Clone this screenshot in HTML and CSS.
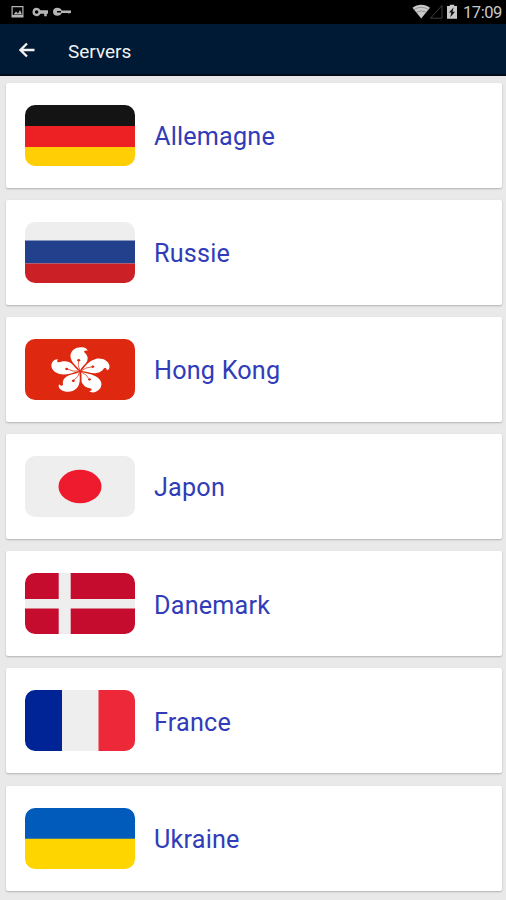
FILE: index.html
```html
<!DOCTYPE html>
<html lang="fr">
<head>
<meta charset="utf-8">
<title>Servers</title>
<link rel="stylesheet" href="styles.css">
</head>
<body>
<header>
  <div class="status">
    <svg class="notifications" viewBox="0 0 64 14" width="64" height="14">
      <path fill-rule="evenodd" d="M.5 1h12v11.500H.5zM1.700 2.200V10h9.600V2.200zM2.500 9.500l2.500-3 2 2 2-3.500 2 4.500z"/>
      <path fill-rule="evenodd" d="M25.500 2.500a4.200 4.200 0 0 1 4 2.500H37v3.500h-1.200V11h-2.600V8.500h-3.700a4.200 4.200 0 1 1-4-6zm.1 2.500a1.800 1.800 0 1 0 0 3.600 1.800 1.800 0 0 0 0-3.600z" transform="translate(0 .2)"/>
      <path fill-rule="evenodd" d="M46.500 2.800c2 0 3.500.9 4.200 2.700H60V8h-1.500v.6h-1.300V8h-6.500c-.7 1.700-2.200 2.700-4.200 2.700-2.800 0-4.500-1.600-4.500-4s1.700-3.900 4.500-3.900zM46 6v1.400h4V6z"/>
    </svg>
    <svg class="signals" viewBox="0 0 48 18" width="48" height="18">
      <path d="M.5 4.800C5.500.8 13 .8 18 4.800L9.200 15.500z" fill="#c9c9c9"/>
      <path d="M1.500 7c4.500-3.500 11-3.500 15.500 0M4 9.800c3-2.300 7.500-2.300 10.500 0" fill="none" stroke="#6d6d6d" stroke-width=".6"/>
      <path d="M18.500 15.200 30 2.500v12.700z" fill="none" stroke="#3e3e3e"/>
      <path d="M35 3h2.800V1.700h4.400V3H45v12.700H35z" fill="#c9c9c9"/>
      <path d="M41.700 4.200 37 9.500h2.300l-1 4.800L43 8.700h-2.500z" fill="#111"/>
    </svg>
    <span class="clock">17:09</span>
  </div>
  <div class="toolbar">
    <svg class="back" viewBox="0 0 16 16" width="16" height="16"><path d="M15.500 8H2M8 1.500 1.500 8 8 14.500"/></svg>
    <h1>Servers</h1>
  </div>
</header>
<main>
  <div class="card">
    <svg class="flag" viewBox="0 0 110 61"><path fill="#141414" d="M0 0h110v21H0z"/><path fill="#ed2024" d="M0 21h110v21H0z"/><path fill="#ffce05" d="M0 42h110v19H0z"/></svg>
    <span>Allemagne</span>
  </div>
  <div class="card">
    <svg class="flag" viewBox="0 0 110 61"><path fill="#eee" d="M0 0h110v19H0z"/><path fill="#22408c" d="M0 18.500h110v23H0z"/><path fill="#cc2027" d="M0 41.500h110V61H0z"/></svg>
    <span>Russie</span>
  </div>
  <div class="card">
    <svg class="flag" viewBox="0 0 110 61">
      <defs>
        <g id="petal">
          <path fill="#fff" d="M0-1C-3-5-7.800-9.500-7.800-15.500-7.600-21-3-24.500 1.500-24 4-23.800 5.500-22.500 6-20.500 4-21.300 2.800-20.500 3.200-19 4.500-17.500 6.600-15.500 5.800-11 5-7.500 1.500-5 0-1z"/>
          <path fill="none" stroke="#de2910" stroke-width=".6" d="M0-1Q-2.500-5-1.200-10"/>
          <circle cx="-1.200" cy="-11" r="1.200" fill="#de2910"/>
        </g>
      </defs>
      <path fill="#de2910" d="M0 0h110v61H0z"/>
      <g transform="translate(55.200 32.200) scale(1.250 1)">
        <use href="#petal"/><use href="#petal" transform="rotate(72)"/><use href="#petal" transform="rotate(144)"/><use href="#petal" transform="rotate(216)"/><use href="#petal" transform="rotate(288)"/>
      </g>
    </svg>
    <span>Hong Kong</span>
  </div>
  <div class="card">
    <svg class="flag" viewBox="0 0 110 61"><path fill="#eee" d="M0 0h110v61H0z"/><ellipse cx="55" cy="30.500" rx="21.500" ry="16.700" fill="#ed1b2d"/></svg>
    <span>Japon</span>
  </div>
  <div class="card">
    <svg class="flag" viewBox="0 0 110 61"><path fill="#c60c2e" d="M0 0h110v61H0z"/><path fill="#eee" d="M33.700 0h12v61h-12z"/><path fill="#eee" d="M0 26h110v9.500H0z"/></svg>
    <span>Danemark</span>
  </div>
  <div class="card">
    <svg class="flag" viewBox="0 0 110 61"><path fill="#002395" d="M0 0h37v61H0z"/><path fill="#eee" d="M37 0h37v61H37z"/><path fill="#ed2939" d="M73.500 0H110v61H73.500z"/></svg>
    <span>France</span>
  </div>
  <div class="card">
    <svg class="flag" viewBox="0 0 110 61"><path fill="#005bbb" d="M0 0h110v31H0z"/><path fill="#ffd500" d="M0 30.700h110V61H0z"/></svg>
    <span>Ukraine</span>
  </div>
</main>
</body>
</html>
```
FILE: styles.css
```css
* { box-sizing: border-box; }
body {
  margin: 0;
  height: 900px;
  overflow: hidden;
  background: #e9e9e9;
  font-family: Roboto, sans-serif;
}
header { background: #001a35; height: 76px; border-bottom: 2px solid #000a18; }
.status {
  display: flex;
  align-items: center;
  height: 24px;
  padding: 0 4px 0 11px;
  background: #000;
  color: #c9c9c9;
}
.notifications { fill: #b5b5b5; margin-right: auto; }
.signals { margin-right: 3px; }
.clock { margin-top: 2px; font-size: 16.5px; line-height: 24px; letter-spacing: -0.4px; }
.toolbar { display: flex; align-items: center; height: 52px; padding-left: 19px; }
.back { fill: none; stroke: #f2f2f2; stroke-width: 2.3; }
h1 {
  margin: 4px 0 0 33px;
  font-size: 19px;
  font-weight: 400;
  line-height: 24px;
  color: #f2f2f2;
}
main {
  display: flex;
  flex-direction: column;
  gap: 12.2px;
  padding: 6.500px 4.500px 0 6px;
}
.card {
  display: flex;
  align-items: center;
  flex: none;
  height: 105px;
  padding-left: 19px;
  background: #fff;
  border-radius: 2px;
  box-shadow: 0 1px 2px rgba(0, 0, 0, .24);
}
.flag { width: 110px; height: 61px; border-radius: 10px; }
.card span {
  margin: 3.500px 0 0 19px;
  font-size: 25.200px;
  line-height: 32px;
  letter-spacing: 0.2px;
  color: #303cb8;
}
```
